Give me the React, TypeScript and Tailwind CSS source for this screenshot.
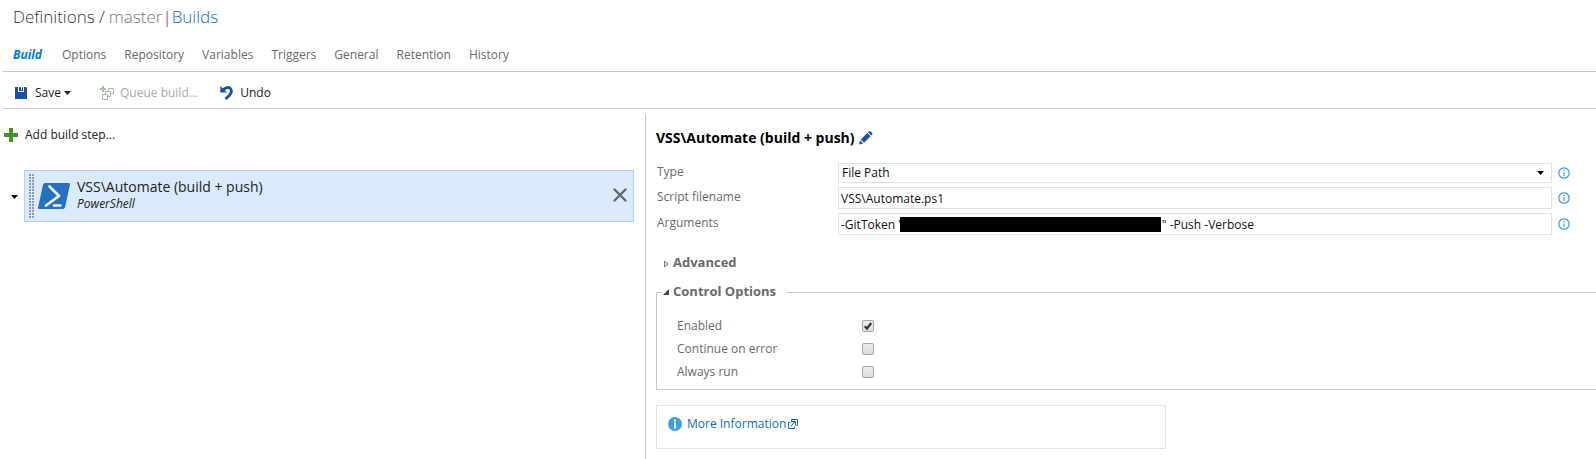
import React from "react";

const tabs = ["Build", "Options", "Repository", "Variables", "Triggers", "General", "Retention", "History"];

const REDACTED_GAP = "\u00a0".repeat(83);

function Caret({ className = "" }: { className?: string }) {
  return (
    <svg width="7" height="4" viewBox="0 0 7 4" className={className} aria-hidden="true">
      <path d="M0 0h7L3.5 4z" fill="currentColor" />
    </svg>
  );
}

function SaveIcon() {
  return (
    <svg width="12" height="12" viewBox="0 0 12 12" aria-hidden="true">
      <path d="M0 0h3v5h6V0h2l1 1v11H0z" fill="#1c529f" />
      <path d="M4 0h4v4H4z" fill="#1c529f" />
      <path d="M6 0h1v3H6z" fill="#fff" />
    </svg>
  );
}

function QueueIcon() {
  return (
    <svg width="14" height="14" viewBox="0 0 14 14" fill="none" aria-hidden="true">
      <path d="M2.500 8.500h5v5h-5zM5.500 8V5.500h5v5H8M8.500 5V2.500h5v5H11" stroke="#b0b0b0" />
      <path d="M3 0v6M0 3h6" stroke="#a3c795" strokeWidth="2" />
    </svg>
  );
}

function UndoIcon() {
  return (
    <svg width="14" height="14" viewBox="0 0 14 14" fill="none" aria-hidden="true">
      <path d="M3 4C5.500 1.200 8.500 .8 10.200 2.400C12.800 5 11 9 5.500 13" stroke="#1c529f" strokeWidth="2.800" />
      <path d="M.3 0L6.800 6.600H.3z" fill="#1c529f" />
    </svg>
  );
}

function PlusIcon() {
  return (
    <svg width="14" height="14" viewBox="0 0 14 14" aria-hidden="true">
      <path d="M5 0h4v5h5v4H9v5H5V9H0V5h5z" fill="#459130" />
    </svg>
  );
}

function PowerShellIcon() {
  return (
    <svg width="32" height="26" viewBox="0 0 32 26" fill="none" aria-hidden="true">
      <path d="M7.200 0H30.600Q32.300 0 31.900 1.700L27 24.200Q26.600 26 24.800 26H1.400Q-.3 26 .1 24.300L5 1.800Q5.400 0 7.200 0z" fill="#2671be" />
      <path d="M11.500 3.500L21 13L8 22.500" stroke="#fff" strokeWidth="2.600" strokeLinecap="round" strokeLinejoin="round" />
      <path d="M16 22.500h6.500" stroke="#fff" strokeWidth="2.400" strokeLinecap="round" />
    </svg>
  );
}

function Grip() {
  return (
    <svg width="5" height="44" viewBox="0 0 5 44" aria-hidden="true">
      {Array.from({ length: 15 }, (_, i) => (
        <path key={i} d={`M0 ${i * 3}h2v2H0zM3 ${i * 3}h2v2H3z`} fill="#8f9aa6" />
      ))}
    </svg>
  );
}

function PencilIcon() {
  return (
    <svg width="14" height="14" viewBox="0 0 14 14" aria-hidden="true">
      <path d="M0 13.500L1 9.300L4.200 12.500z" fill="#1c529f" />
      <path d="M1.800 8.500L8.300 2L11.500 5.200L5 11.700z" fill="#1c529f" />
      <path d="M9 1.300L10.200.2Q10.700-.2 11.200.2L13.300 2.300Q13.700 2.800 13.300 3.300L12.200 4.500z" fill="#1c529f" />
    </svg>
  );
}

function InfoOutline() {
  return (
    <svg width="12" height="12" viewBox="0 0 12 12" fill="none" aria-hidden="true">
      <circle cx="6" cy="6" r="5.200" stroke="#3b9fe2" strokeWidth="1.300" />
      <path d="M5.400 3h1.200v1.200H5.400zM5.400 5.200h1.200V9H5.400z" fill="#3b9fe2" />
    </svg>
  );
}

function InfoSolid() {
  return (
    <svg width="14" height="14" viewBox="0 0 14 14" aria-hidden="true">
      <circle cx="7" cy="7" r="7" fill="#3b9fe2" />
      <path d="M6 2.500h2v2H6zM6 5.500h2v6H6z" fill="#fff" />
    </svg>
  );
}

function ExternalIcon() {
  return (
    <svg width="10" height="10" viewBox="0 0 10 10" fill="none" stroke="#106ebe" aria-hidden="true">
      <path d="M3.500 3V.5h6v6H7.500M2.500 3.500h-2v6h6v-2M2.500 7.500L7 3M4 2.500h3.500V6" />
    </svg>
  );
}

function InfoButton({ label }: { label: string }) {
  return (
    <button type="button" aria-label={label} className="ml-[6px] shrink-0">
      <InfoOutline />
    </button>
  );
}

function CheckRow({ id, label, checked = false }: { id: string; label: string; checked?: boolean }) {
  return (
    <div className="flex h-[23px] items-center">
      <label htmlFor={id} className="w-[185px]">{label}</label>
      <span className="relative flex">
        <input
          id={id}
          type="checkbox"
          defaultChecked={checked}
          className="peer size-3 appearance-none rounded-xs border border-[#a6a6a6] bg-linear-to-b from-[#ededed] to-[#dcdcdc]"
        />
        <svg viewBox="0 0 12 12" fill="none" className="pointer-events-none absolute inset-0 hidden size-3 peer-checked:block" aria-hidden="true">
          <path d="M2.800 6.200L5 8.600L9.200 3" stroke="#333" strokeWidth="2.200" />
        </svg>
      </span>
    </div>
  );
}

const fieldClass = "w-full border border-[#e2e2e2] bg-white text-[#111] outline-none";
const rowLabel = "w-[181px] shrink-0 pb-[3px] leading-[18px]";

export default function App() {
  return (
    <div className="flex min-h-screen flex-col bg-white font-['Open_Sans','Noto_Sans',sans-serif] text-xs text-[#6a6a6a]">
      <header className="ml-[3px] border-b border-[#c8c8c8] pl-[10px]">
        <h1 className="flex h-[34px] items-center text-[17px] font-light text-[#333]">
          <span className="pr-1">Definitions /</span>
          <span className="text-[#777]">master</span>
          <span className="text-[#68217a]">|</span>
          <a href="#builds" className="text-[#106ebe]">Builds</a>
        </h1>
        <nav className="flex h-[37px] items-center gap-[18px] pt-[5px]">
          {tabs.map((tab, i) => (
            <a key={tab} href={`#${tab.toLowerCase()}`} className={i === 0 ? "pr-0.5 font-bold text-[#007acc] italic" : ""}>
              {tab}
            </a>
          ))}
        </nav>
      </header>

      <div role="toolbar" className="ml-[3px] flex h-[37px] items-center border-b border-[#c8c8c8] pt-[5px] pl-3 text-[#222]">
        <button type="button" className="flex items-center">
          <SaveIcon />
          <span className="ml-2">Save</span>
          <Caret className="ml-[3px]" />
        </button>
        <button type="button" disabled className="ml-[29px] flex items-center gap-[6px] text-[#aaa]">
          <QueueIcon />
          Queue build...
        </button>
        <button type="button" className="ml-[22px] flex items-center gap-[6px]">
          <UndoIcon />
          Undo
        </button>
      </div>

      <div className="flex grow pt-[5px]">
        <section className="w-[645px] shrink-0 pr-[11px]">
          <button type="button" className="mt-[11px] ml-1 flex h-5 items-center gap-[7px] text-[#222]">
            <PlusIcon />
            Add build step...
          </button>
          <div className="mt-[25px] flex items-center">
            <button type="button" aria-label="Collapse" className="flex w-6 justify-center pt-0.5 pl-[5px] text-black">
              <Caret />
            </button>
            <div className="flex h-[52px] grow items-center border border-[#b2d3f5] bg-[#dbeafa] pr-[6px] pl-1">
              <Grip />
              <span className="ml-1">
                <PowerShellIcon />
              </span>
              <div className="ml-[7px] grow pb-[3px] text-[#222]">
                <div className="text-sm leading-[17px]">VSS\Automate (build + push)</div>
                <div className="leading-[17px] italic">PowerShell</div>
              </div>
              <button type="button" aria-label="Remove step" className="pb-0.5">
                <svg width="14" height="14" viewBox="0 0 14 14" fill="none" aria-hidden="true">
                  <path d="M1.500 1.500l11 11M12.500 1.500l-11 11" stroke="#666" strokeWidth="2.400" strokeLinecap="round" />
                </svg>
              </button>
            </div>
          </div>
        </section>

        <section className="min-w-0 grow border-l border-[#c8c8c8] pl-[10px]">
          <div className="mt-[14px] flex h-5 items-center gap-1">
            <h2 className="text-sm font-bold text-black">VSS\Automate (build + push)</h2>
            <button type="button" aria-label="Rename step">
              <PencilIcon />
            </button>
          </div>

          <form className="mt-[15px] mr-[26px] ml-px flex flex-col gap-1">
            <div className="flex h-5 items-center">
              <label htmlFor="type" className={rowLabel}>Type</label>
              <div className="relative grow">
                <select id="type" className={`${fieldClass} block h-5 appearance-none pl-[3px]`}>
                  <option>File Path</option>
                </select>
                <Caret className="pointer-events-none absolute top-2 right-2 text-black" />
              </div>
              <InfoButton label="About type" />
            </div>
            <div className="flex h-[22px] items-center">
              <label htmlFor="script" className={rowLabel}>Script filename</label>
              <input id="script" defaultValue="VSS\Automate.ps1" className={`${fieldClass} h-[22px] px-0.5`} />
              <InfoButton label="About script filename" />
            </div>
            <div className="flex h-[22px] items-center">
              <label htmlFor="arguments" className={rowLabel}>Arguments</label>
              <div className="relative grow">
                <input
                  id="arguments"
                  defaultValue={`-GitToken "${REDACTED_GAP}" -Push -Verbose`}
                  className={`${fieldClass} block h-[22px] px-0.5`}
                />
                <span className="absolute top-1 left-[62px] h-[15px] w-[261px] bg-black" />
              </div>
              <InfoButton label="About arguments" />
            </div>
          </form>

          <button type="button" className="mt-[18px] ml-2 flex h-5 items-center gap-1 text-[13px] font-bold">
            <svg width="5" height="8" viewBox="0 0 5 8" fill="none" stroke="#666" className="mt-0.5" aria-hidden="true">
              <path d="M.6 1.200v5.600L4 4z" />
            </svg>
            Advanced
          </button>

          <fieldset className="mt-[9px] border border-r-0 border-[#c8c8c8] pb-[6px] pl-5">
            <legend className="-ml-[14px] pr-[10px]">
              <button type="button" className="flex h-5 items-center gap-1 text-[13px] font-bold">
                <svg width="6" height="6" viewBox="0 0 6 6" aria-hidden="true">
                  <path d="M6 0v6H0z" fill="#444" />
                </svg>
                Control Options
              </button>
            </legend>
            <div className="pt-3">
              <CheckRow id="enabled" label="Enabled" checked />
              <CheckRow id="continue" label="Continue on error" />
              <CheckRow id="always" label="Always run" />
            </div>
          </fieldset>

          <div className="mt-[15px] mb-[10px] flex h-11 w-[510px] max-w-full items-start border border-[#e2e2e2] pt-2 pl-[11px]">
            <a href="#more" className="flex h-5 items-center text-[#106ebe]">
              <InfoSolid />
              <span className="mr-0.5 ml-[5px]">More Information</span>
              <ExternalIcon />
            </a>
          </div>
        </section>
      </div>
    </div>
  );
}
